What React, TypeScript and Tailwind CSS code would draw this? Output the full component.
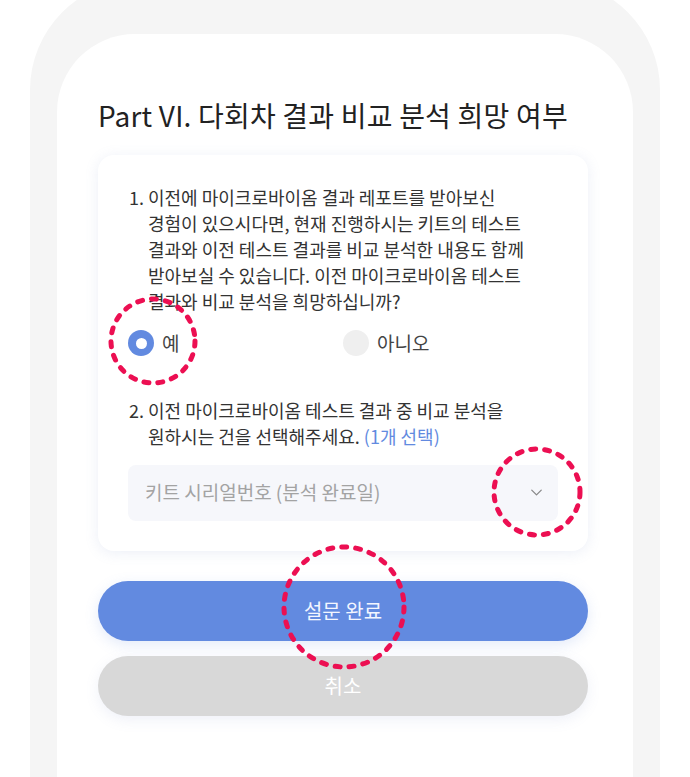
import { ChevronDown } from 'lucide-react'

const font = { fontFamily: '"Noto Sans CJK KR", "Noto Sans", sans-serif' }

// 검토용 빨간 점선 동그라미 (스크린샷 주석)
function Mark({ className, size }: { className: string; size: number }) {
  const r = size / 2 - 4
  return (
    <svg
      className={`pointer-events-none absolute ${className}`}
      width={size}
      height={size}
      viewBox={`0 0 ${size} ${size}`}
    >
      <circle
        cx={size / 2}
        cy={size / 2}
        r={r}
        fill="none"
        stroke="#ec0f52"
        strokeWidth={5}
        strokeLinecap="round"
        strokeDasharray="5 9"
      />
    </svg>
  )
}

function Radio({ label, checked }: { label: string; checked?: boolean }) {
  return (
    <label className="flex items-center gap-[8px]">
      {checked ? (
        <span className="flex size-[26px] items-center justify-center rounded-full bg-[#628ae0]">
          <span className="size-[11px] rounded-full bg-white" />
        </span>
      ) : (
        <span className="size-[26px] rounded-full bg-[#efefef]" />
      )}
      <span className="text-[19px] text-[#444]">{label}</span>
    </label>
  )
}

export default function App() {
  return (
    <div className="relative h-[777px] w-[690px] overflow-hidden bg-white" style={font}>
      <div className="h-full px-[30px]">
        <div className="h-[900px] -mt-[20px] rounded-t-[110px] bg-[#f5f5f5] px-[27px] pt-[54px]">
          <div className="h-full rounded-t-[78px] bg-white pl-[41px] pt-[63px]">
            <h1 className="text-[28px] leading-[36px] font-normal tracking-[0.2px] text-[#222]">
              Part VI. 다회차 결과 비교 분석 희망 여부
            </h1>

            <div className="mt-[22px] w-[490px] rounded-[16px] bg-white px-[30px] pt-[29px] pb-[30px] shadow-[0_2px_14px_rgba(120,140,200,0.14)]">
              <div className="flex text-[18px] leading-[26px] text-[#333]">
                <span className="w-[20px] shrink-0 pl-[1px]">1.</span>
                <p className="w-[400px] break-keep">
                  이전에 마이크로바이옴 결과 레포트를 받아보신 경험이 있으시다면, 현재 진행하시는 키트의 테스트
                  결과와 이전 테스트 결과를 비교 분석한 내용도 함께 받아보실 수 있습니다. 이전 마이크로바이옴 테스트
                  결과와 비교 분석을 희망하십니까?
                </p>
              </div>

              <div className="mt-[15px] grid grid-cols-2">
                <Radio label="예" checked />
                <Radio label="아니오" />
              </div>

              <div className="mt-[39px] flex text-[18px] leading-[26px] text-[#333]">
                <span className="w-[20px] shrink-0 pl-[1px]">2.</span>
                <p className="w-[400px] break-keep">
                  이전 마이크로바이옴 테스트 결과 중 비교 분석을 원하시는 건을 선택해주세요.{' '}
                  <span className="text-[#628ae0]">(1개 선택)</span>
                </p>
              </div>

              <div className="mt-[16px] flex h-[56px] items-center justify-between rounded-[8px] bg-[#f6f7fb] pr-[12px] pl-[17px]">
                <span className="text-[19px] text-[#a3a3a3]">키트 시리얼번호 (분석 완료일)</span>
                <ChevronDown className="size-[19px] text-[#888]" strokeWidth={1.6} />
              </div>
            </div>

            <div className="mt-[30px] flex w-[490px] flex-col gap-[15px]">
              <button className="h-[60px] rounded-full bg-[#628ae0] text-[20px] text-[#f3f6ff] shadow-[0_4px_14px_rgba(98,138,224,0.18)]">
                설문 완료
              </button>
              <button className="h-[60px] rounded-full bg-[#d8d8d8] text-[20px] text-white shadow-[0_4px_14px_rgba(120,140,200,0.12)]">
                취소
              </button>
            </div>
          </div>
        </div>
      </div>

      <Mark className="left-[107px] top-[295px]" size={92} />
      <Mark className="left-[490px] top-[445px]" size={94} />
      <Mark className="left-[280px] top-[543px]" size={128} />
    </div>
  )
}
